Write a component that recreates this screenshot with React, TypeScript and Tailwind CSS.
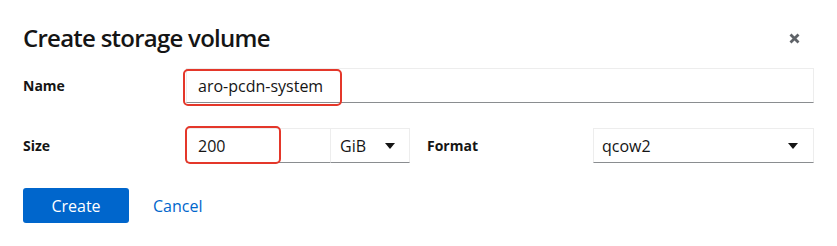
import React from "react";

const font = { fontFamily: '"Open Sans", "Liberation Sans", sans-serif' };

const Caret = () => (
  <svg width="10" height="6" viewBox="0 0 10 6" className="shrink-0">
    <path d="M0 0 H10 L5 6 Z" fill="#151515" />
  </svg>
);

const CloseIcon = () => (
  <svg width="11" height="11" viewBox="0 0 11 11">
    <path d="M1.5 1.5 L9.5 9.5 M9.5 1.5 L1.5 9.5" stroke="#5f6368" strokeWidth="2.8" strokeLinecap="butt" />
  </svg>
);

const Highlight = ({ className }: { className: string }) => (
  <div className={`pointer-events-none absolute rounded-[5px] border-[2.5px] border-[#e4372a] ${className}`} />
);

export default function App() {
  return (
    <div className="h-[246px] w-[837px] overflow-hidden bg-white px-[23px] pt-[22px] text-[#151515]" style={font}>
      <div className="flex items-center justify-between">
        <h1 className="text-[24px] leading-[32px] font-semibold tracking-[-0.75px]">Create storage volume</h1>
        <button className="mr-[10px] flex h-[20px] w-[20px] items-center justify-center">
          <CloseIcon />
        </button>
      </div>

      <div className="mt-[14px] flex items-center">
        <label className="w-[163px] text-[14px] font-bold">Name</label>
        <div className="relative flex-1">
          <div className="flex h-[35px] items-center border border-[#ededed] border-b-[#8a8d90] px-[11px] text-[16px]">
            aro-pcdn-system
          </div>
          <Highlight className="-left-[3px] top-[1px] h-[37px] w-[159px]" />
        </div>
      </div>

      <div className="mt-[25px] grid grid-cols-2 gap-x-[17px]">
        <div className="flex items-center">
          <label className="w-[163px] text-[14px] font-bold">Size</label>
          <div className="relative flex flex-1">
            <div className="flex h-[35px] w-[145px] items-center border border-[#ededed] border-b-[#8a8d90] px-[11px] text-[16px]">
              200
            </div>
            <div className="flex h-[35px] flex-1 items-center justify-between border border-l-0 border-[#ededed] border-b-[#8a8d90] pl-[9px] pr-[14px] text-[16px]">
              GiB
              <Caret />
            </div>
            <Highlight className="-left-[1px] -top-[2px] h-[38px] w-[96px]" />
          </div>
        </div>
        <div className="flex items-center">
          <label className="w-[166px] text-[14px] font-bold">Format</label>
          <div className="flex h-[35px] flex-1 items-center justify-between border border-[#ededed] border-b-[#8a8d90] pl-[8px] pr-[15px] text-[16px]">
            qcow2
            <Caret />
          </div>
        </div>
      </div>

      <div className="mt-[25px] flex items-center gap-[24px]">
        <button className="h-[35px] w-[106px] rounded-[3px] bg-[#0066cc] text-[16px] text-white">Create</button>
        <button className="text-[16px] text-[#0066cc]">Cancel</button>
      </div>
    </div>
  );
}
